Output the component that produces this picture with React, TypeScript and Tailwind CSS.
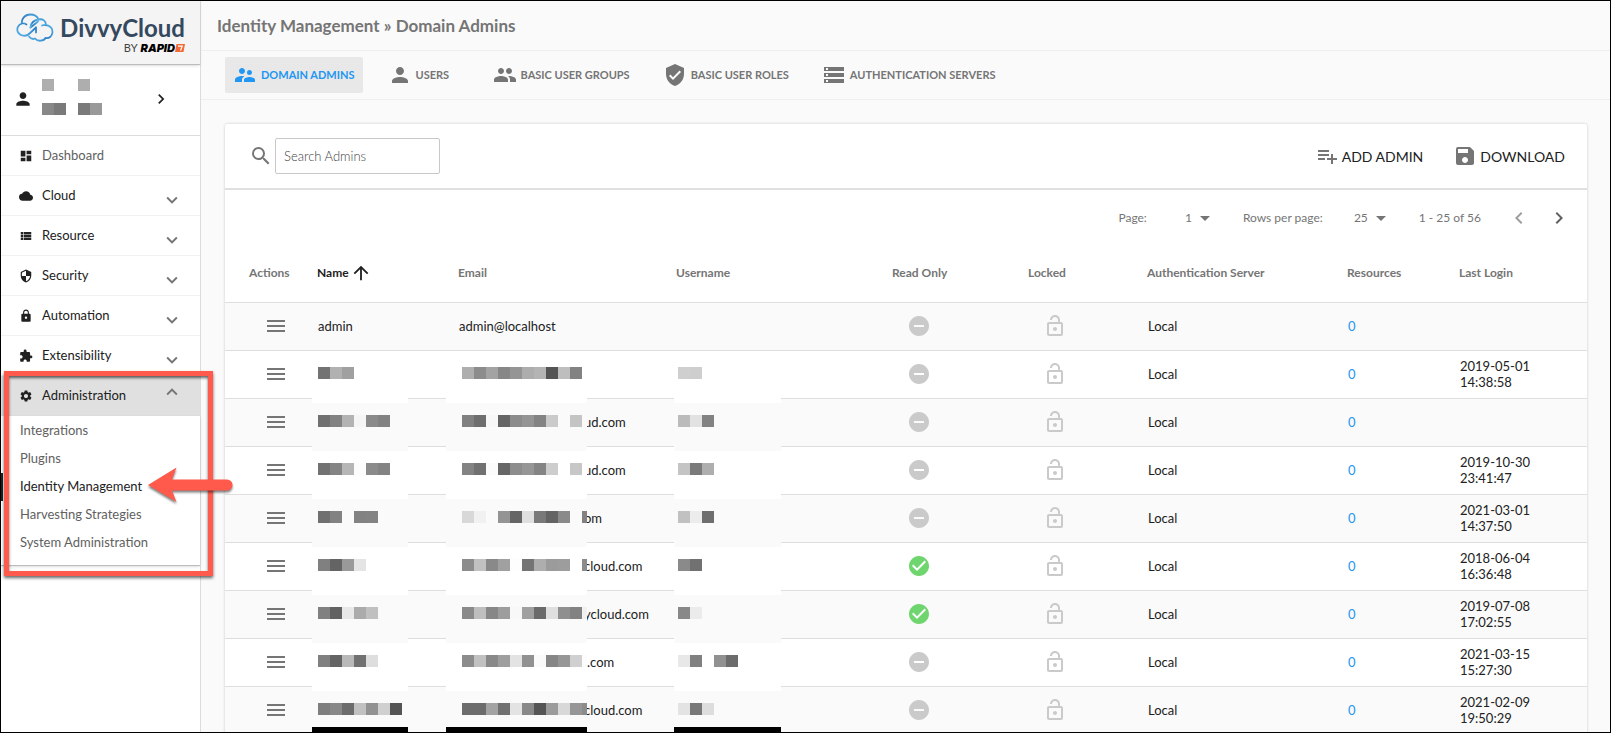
import type { ReactNode } from "react";
import type { IconType } from "react-icons";
import {
  MdArrowDropDown,
  MdArrowUpward,
  MdCheckCircle,
  MdChevronLeft,
  MdChevronRight,
  MdCloud,
  MdDashboard,
  MdExpandLess,
  MdExpandMore,
  MdExtension,
  MdGroup,
  MdLock,
  MdLockOpen,
  MdMenu,
  MdPerson,
  MdPlaylistAdd,
  MdRemoveCircle,
  MdSave,
  MdSearch,
  MdSecurity,
  MdSettings,
  MdStorage,
  MdSupervisorAccount,
  MdVerifiedUser,
  MdViewList,
} from "react-icons/md";

type Section = { label: string; icon: IconType; expandable?: boolean };

const sections: Section[] = [
  { label: "Dashboard", icon: MdDashboard },
  { label: "Cloud", icon: MdCloud, expandable: true },
  { label: "Resource", icon: MdViewList, expandable: true },
  { label: "Security", icon: MdSecurity, expandable: true },
  { label: "Automation", icon: MdLock, expandable: true },
  { label: "Extensibility", icon: MdExtension, expandable: true },
];

const adminLinks = ["Integrations", "Plugins", "Identity Management", "Harvesting Strategies", "System Administration"];

const tabs: { label: string; icon: IconType }[] = [
  { label: "DOMAIN ADMINS", icon: MdSupervisorAccount },
  { label: "USERS", icon: MdPerson },
  { label: "BASIC USER GROUPS", icon: MdGroup },
  { label: "BASIC USER ROLES", icon: MdVerifiedUser },
  { label: "AUTHENTICATION SERVERS", icon: MdStorage },
];

type Row = {
  name: string | number[];
  email: string;
  emailMask?: number[];
  userMask?: number[];
  readOnly?: boolean;
  login?: [string, string];
};

// Masks list the grey level of each 12px block; 0 leaves a block empty.
const rows: Row[] = [
  { name: "admin", email: "admin@localhost" },
  { name: [115, 177, 160], email: "", emailMask: [174, 140, 163, 135, 149, 173, 180, 84, 190, 130], userMask: [207, 206], login: ["2019-05-01", "14:38:58"] },
  { name: [112, 130, 179, 245, 138, 130], email: "ud.com", emailMask: [128, 110, 247, 101, 139, 148, 131, 202, 0, 196], userMask: [187, 226, 130] },
  { name: [114, 132, 182, 252, 139, 131], email: "ud.com", emailMask: [131, 113, 251, 102, 141, 150, 132, 205, 0, 199], userMask: [196, 122, 174], login: ["2019-10-30", "23:41:47"] },
  { name: [112, 130, 0, 130, 131], email: "om", emailMask: [216, 241, 0, 148, 101, 223, 121, 100, 138, 0, 130], userMask: [193, 236, 110], login: ["2021-03-01", "14:37:50"] },
  { name: [128, 100, 153, 228], email: "cloud.com", emailMask: [140, 193, 137, 160, 253, 116, 174, 155, 157, 0, 139], userMask: [138, 113], readOnly: true, login: ["2018-06-04", "16:36:48"] },
  { name: [128, 98, 232, 171, 192], email: "ycloud.com", emailMask: [138, 190, 135, 157, 248, 160, 106, 223, 143, 130, 241], userMask: [136, 235], readOnly: true, login: ["2019-07-08", "17:02:55"] },
  { name: [128, 100, 185, 113, 222], email: ".com", emailMask: [140, 193, 137, 158, 227, 145, 250, 134, 150, 208, 252], userMask: [232, 128, 0, 145, 108], login: ["2021-03-15", "15:27:30"] },
  { name: [126, 136, 108, 193, 146, 208, 84], email: "cloud.com", emailMask: [108, 108, 163, 113, 227, 136, 84, 155, 216, 150, 140], userMask: [227, 120, 221], login: ["2021-02-09", "19:50:29"] },
];

// Left padding of an email: a leading dot starts just past the mask, letters run slightly under it.
function emailPadding(row: Row) {
  if (!row.emailMask) return "pl-px";
  return row.email.startsWith(".") ? "pl-[129px]" : "pl-[126px]";
}

function Blocks({ levels }: { levels: number[] }) {
  return (
    <span className="flex">
      {levels.map((v, i) => (
        <span key={i} className="size-3 shrink-0" style={v ? { backgroundColor: `rgb(${v},${v},${v})` } : undefined} />
      ))}
    </span>
  );
}

function Mask({ levels, odd, last, className }: { levels: number[]; odd: boolean; last: boolean; className: string }) {
  return (
    <div
      className={`absolute top-1 z-10 h-12 overflow-hidden pt-3 ${odd ? "bg-white" : "bg-[#fafafa]"} ${
        last ? "border-b-[12px] border-black" : ""
      } ${className}`}
    >
      <Blocks levels={levels} />
    </div>
  );
}

function Logo() {
  return (
    <div className="flex h-16 shrink-0 items-start border-b border-[#bdbdbd] bg-[#f4f4f4] pt-3 pl-[15px] shadow-sm">
      <svg viewBox="0 0 38 29" className="h-[29px] w-[38px] shrink-0" fill="none" strokeWidth="1.8" strokeLinecap="round" strokeLinejoin="round">
        <defs>
          <linearGradient id="cloud" x1="0" y1="1" x2="1" y2="0">
            <stop offset="0" stopColor="#58b4e8" />
            <stop offset="0.5" stopColor="#2f7fc4" />
            <stop offset="1" stopColor="#58b4e8" />
          </linearGradient>
        </defs>
        <g stroke="url(#cloud)">
          <path d="M20 14.500L13 21C10 24 4 23 1.800 19C.3 15 2.500 11.500 6 10.500C5 6 9 1.500 14 1.500C18 1.500 21.500 3.500 22.500 6.500C27 5.500 30 8 30 12" />
          <path d="M6 10.500C8 10 9.500 10.500 10.500 11.500" />
          <path d="M14.500 14.500L22 8.500M20 19.500V14.500" />
          <path d="M22.500 6.500C18 7 15 10 14.500 14.500" />
          <path d="M30 12C34 12.500 37 15.500 36.500 19.500C36 23.500 33 25.500 29.500 25C28 28 22 29 19 25.500C17 26.500 14.500 25.500 13 23.500" />
          <path d="M26 12.500C27 12 28.500 11.800 30 12" />
        </g>
      </svg>
      <div className="ml-2 flex w-[123px] flex-col items-end">
        <span className="text-[24px] leading-[30px] font-bold text-[#34495e]">DivvyCloud</span>
        <span className="flex items-center text-[11px] leading-[10px] text-[#444]">
          BY
          <span className="ml-[3px] font-['Inter',sans-serif] font-black text-black italic">RAPID</span>
          <svg viewBox="0 0 10 8" className="h-2 w-[10px]" aria-label="7">
            <path d="M1.500 0H10L8.500 8H0Z" fill="#f26a36" />
            <path d="M3 2.200H7.200L5.500 6.500" stroke="#fff" strokeWidth="1.200" fill="none" />
          </svg>
        </span>
      </div>
    </div>
  );
}

function Sidebar() {
  return (
    <aside className="flex w-[200px] shrink-0 flex-col border-r border-[#dcdcdc] bg-white">
      <Logo />
      <button type="button" aria-label="Account" className="flex h-[71px] shrink-0 items-center border-b border-[#dcdcdc] pr-[29px] pl-3">
        <MdPerson className="mb-[2px] size-5 text-[#212121]" />
        <span className="mb-[6px] ml-[9px] flex flex-col gap-3">
          <Blocks levels={[174, 0, 0, 174]} />
          <Blocks levels={[136, 122, 0, 122, 153]} />
        </span>
        <MdChevronRight className="mb-[2px] ml-auto size-5 text-[#212121]" />
      </button>
      <nav className="text-[13px] text-[#212121]">
        {sections.map(({ label, icon: Icon, expandable }) => (
          <button
            key={label}
            type="button"
            className={`flex h-10 w-full items-center border-b border-[#f2f2f2] pr-[17px] pl-[18px] ${expandable ? "" : "text-[#616161]"}`}
          >
            <Icon className="size-[14px] text-[#212121]" />
            <span className="ml-[9px]">{label}</span>
            {expandable && <MdExpandMore className="mt-2 ml-auto size-[22px] text-[#757575]" />}
          </button>
        ))}
        <button type="button" aria-expanded="true" className="flex h-10 w-full items-center bg-[#e0e0e0] pr-[17px] pl-[18px]">
          <MdSettings className="size-[14px] text-[#212121]" />
          <span className="ml-[9px]">Administration</span>
          <MdExpandLess className="mb-2 ml-auto size-[22px] text-[#757575]" />
        </button>
        <ul className="border-b border-[#bdbdbd] pt-px pb-2 shadow-sm">
          {adminLinks.map((label) => {
            const active = label === "Identity Management";
            return (
              <li key={label}>
                <a
                  href="#"
                  aria-current={active ? "page" : undefined}
                  className={`flex h-7 items-center border-l-2 pl-[17px] ${
                    active ? "border-[#212121] text-[#212121]" : "border-transparent text-[#616161]"
                  }`}
                >
                  {label}
                </a>
              </li>
            );
          })}
        </ul>
      </nav>
    </aside>
  );
}

function Picker({ label, value }: { label: string; value: string }) {
  return (
    <label className="flex items-center">
      {label}
      <span className="relative flex w-[70px] items-center">
        <select defaultValue={value} className="w-full appearance-none bg-transparent pr-[25px] text-right [text-align-last:right] outline-none">
          <option>{value}</option>
        </select>
        <MdArrowDropDown className="pointer-events-none absolute right-0 size-6" />
      </span>
    </label>
  );
}

function Th({ children, className = "" }: { children: ReactNode; className?: string }) {
  return <th scope="col" className={`h-14 p-0 pb-[2px] text-left text-[12px] font-bold ${className}`}>{children}</th>;
}

function AdminTable() {
  const td = "relative h-12 border-t border-[#dedede] p-0 pb-[2px]";
  return (
    <table className="w-full table-fixed border-separate border-spacing-0 text-[13px] leading-4 text-[#212121]">
      <colgroup>
        <col className="w-[92px]" />
        <col className="w-[141px]" />
        <col className="w-[218px]" />
        <col className="w-[216px]" />
        <col className="w-[136px]" />
        <col className="w-[119px]" />
        <col className="w-[200px]" />
        <col className="w-[112px]" />
        <col className="w-[128px]" />
      </colgroup>
      <thead className="text-[#757575]">
        <tr>
          <Th className="pl-6">Actions</Th>
          <Th className="text-[#212121]">
            <button type="button" className="flex items-center gap-px font-bold">
              Name <MdArrowUpward className="size-[22px]" />
            </button>
          </Th>
          <Th>Email</Th>
          <Th>Username</Th>
          <Th>Read Only</Th>
          <Th>Locked</Th>
          <Th>Authentication Server</Th>
          <Th>Resources</Th>
          <Th>Last Login</Th>
        </tr>
      </thead>
      <tbody>
        {rows.map((row, i) => {
          const odd = i % 2 === 1;
          const last = i === rows.length - 1;
          return (
            <tr key={i} className={odd ? "bg-white" : "bg-[#fafafa]"}>
              <td className={`${td} pl-[39px]`}>
                <button type="button" aria-label="Row actions" className="block">
                  <MdMenu className="size-6 text-[#757575]" />
                </button>
              </td>
              <td className={`${td} pl-px`}>
                {typeof row.name === "string" ? row.name : <Mask levels={row.name} odd={odd} last={last} className="-left-[5px] w-24 pl-[6px]" />}
              </td>
              <td className={`${td} ${emailPadding(row)}`}>
                {row.email}
                {row.emailMask && <Mask levels={row.emailMask} odd={odd} last={last} className="-left-3 w-[141px] pl-4" />}
              </td>
              <td className={td}>
                {row.userMask && <Mask levels={row.userMask} odd={odd} last={last} className="-left-[2px] w-[107px] pl-1" />}
              </td>
              <td className={`${td} pl-[15px]`}>
                {row.readOnly ? <MdCheckCircle className="size-6 text-[#6fd56f]" /> : <MdRemoveCircle className="size-6 text-[#cacaca]" />}
              </td>
              <td className={`${td} pl-[15px]`}>
                <MdLockOpen className="size-6 text-[#cacaca]" />
              </td>
              <td className={`${td} pl-px`}>Local</td>
              <td className={`${td} pl-px`}>
                <a href="#" className="text-[#2196f3]">0</a>
              </td>
              <td className={`${td} pl-px`}>
                {row.login && (
                  <>
                    {row.login[0]}
                    <br />
                    {row.login[1]}
                  </>
                )}
              </td>
            </tr>
          );
        })}
      </tbody>
    </table>
  );
}

function Callout() {
  return (
    <div className="pointer-events-none absolute top-[370px] left-[3px] z-20 h-[205px] w-[209px] border-[5px] border-[#ff5a4b] shadow-[0_2px_3px_rgba(0,0,0,0.6),inset_0_2px_3px_rgba(0,0,0,0.6)]">
      <svg
        viewBox="0 0 86 36"
        className="absolute top-[92px] left-[139px] h-9 w-[86px] overflow-visible drop-shadow-[0_2px_1px_rgba(0,0,0,0.5)]"
        fill="#ff5a4b"
      >
        <path d="M0 17L28.500 -0.500L24 11.500H79A5.500 5.500 0 0 1 79 22.500H24L28.500 34Z" />
      </svg>
    </div>
  );
}

export default function App() {
  return (
    <div className="relative flex h-screen overflow-hidden border border-black bg-[#fafafa] font-['Lato',sans-serif]">
      <Sidebar />
      <main className="min-w-0 flex-1">
        <h1 className="flex h-[50px] items-center border-b border-[#eeeeee] pl-4 text-[17px] font-bold text-[#757575]">
          Identity Management » Domain Admins
        </h1>
        <div className="flex h-[49px] items-center gap-[17px] border-b border-[#eeeeee] pl-6">
          {tabs.map(({ label, icon: Icon }, i) => (
            <button
              key={label}
              type="button"
              className={`flex h-9 min-w-[88px] items-center gap-1 rounded-[2px] px-2 text-[11px] font-bold ${
                i === 0 ? "bg-[#e8e8e8] text-[#2196f3]" : "text-[#757575]"
              }`}
            >
              <Icon className="size-6" />
              {label}
            </button>
          ))}
        </div>
        <section className="mt-6 mr-[23px] ml-6 rounded-[2px] bg-white shadow-[0_0_3px_rgba(0,0,0,0.2)]">
          <div className="flex h-[66px] items-center border-b-2 border-[#e0e0e0] pr-[22px] pl-6">
            <label htmlFor="search" aria-label="Search admins">
              <MdSearch className="size-6 text-[#757575]" />
            </label>
            <input
              id="search"
              type="text"
              placeholder="Search Admins"
              className="ml-[2px] h-9 w-[165px] rounded-[2px] border border-[#c8c8c8] px-2 text-[13px] text-[#424242] placeholder:font-light placeholder:text-[#424242]"
            />
            <div className="ml-auto flex items-center gap-[30px] text-[14px] text-[#212121]">
              <button type="button" className="flex items-center gap-[3px]">
                <MdPlaylistAdd className="size-6 text-[#757575]" />
                ADD ADMIN
              </button>
              <button type="button" className="flex items-center gap-[3px]">
                <MdSave className="size-6 text-[#757575]" />
                DOWNLOAD
              </button>
            </div>
          </div>
          <div className="flex h-[56px] items-center justify-end gap-[26px] pr-4 text-[12px] text-[#757575]">
            <Picker label="Page:" value="1" />
            <Picker label="Rows per page:" value="25" />
            <span>1 - 25 of 56</span>
            <span className="flex items-center gap-4">
              <button type="button" disabled aria-label="Previous page">
                <MdChevronLeft className="size-6 text-[#9e9e9e]" />
              </button>
              <button type="button" aria-label="Next page">
                <MdChevronRight className="size-6 text-[#616161]" />
              </button>
            </span>
          </div>
          <AdminTable />
        </section>
      </main>
      <Callout />
    </div>
  );
}
